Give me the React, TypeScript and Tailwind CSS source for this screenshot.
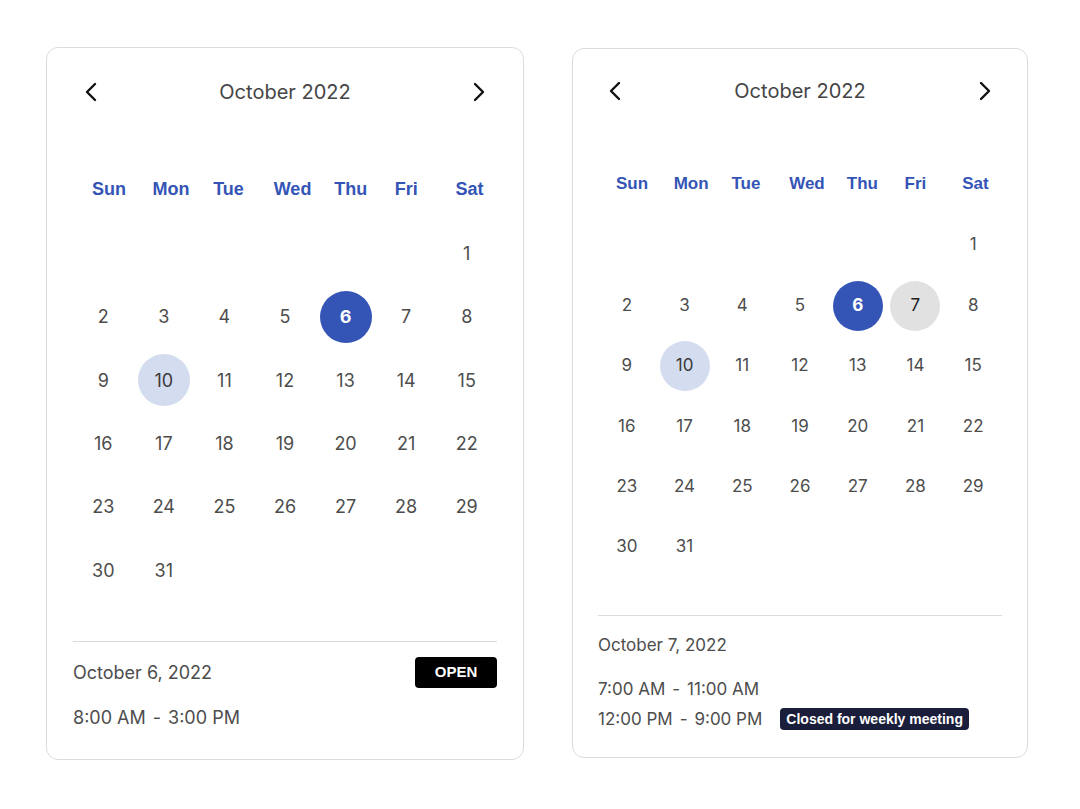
import React from "react";

type Mark = "selected" | "today" | "muted";

const WEEKDAYS = ["Sun", "Mon", "Tue", "Wed", "Thu", "Fri", "Sat"];

// October 2022 starts on a Saturday
const DAYS: (number | null)[] = [
  null, null, null, null, null, null,
  ...Array.from({ length: 31 }, (_, i) => i + 1),
];

function Chevron({ dir }: { dir: "left" | "right" }) {
  return (
    <svg width="12" height="20" viewBox="0 0 12 20" fill="none">
      <path
        d={dir === "left" ? "M10 2 L2 10 L10 18" : "M2 2 L10 10 L2 18"}
        stroke="#111"
        strokeWidth="2.4"
        strokeLinecap="round"
        strokeLinejoin="round"
      />
    </svg>
  );
}

function Range({ from, to }: { from: string; to: string }) {
  return (
    <span>
      {from}
      <span className="mx-[7px]">-</span>
      {to}
    </span>
  );
}

function CalendarGrid({
  marks,
  big,
}: {
  marks: Record<number, Mark>;
  big: boolean;
}) {
  const circle = big ? "w-[52px] h-[52px]" : "w-[50px] h-[50px]";
  const rowH = big ? "h-[63.33px]" : "h-[60.4px]";
  const numSize = big ? "text-[18px]" : "text-[17px]";

  return (
    <>
      {/* weekday labels */}
      <div
        className={`grid grid-cols-7 h-[28px] items-center ${big ? "mt-[63px]" : "mt-[59px]"}`}
      >
        {WEEKDAYS.map((d) => (
          <div
            key={d}
            className={`font-bold text-[#3455b6] ${big ? "text-[18px] pl-[19px]" : "text-[17px] pl-[18px]"}`}
            style={{ fontFamily: '"Liberation Sans", Arial, sans-serif' }}
          >
            {d}
          </div>
        ))}
      </div>

      {/* day numbers */}
      <div className={`grid grid-cols-7 ${big ? "mt-[19px]" : "mt-[17px]"}`}>
        {DAYS.map((n, i) => {
          const mark = n ? marks[n] : undefined;
          let tone = "text-[#4d4d4d]";
          if (mark === "selected") tone = "bg-[#3455b6] text-white font-bold";
          if (mark === "today") tone = "bg-[#d4dcf0] text-[#3a3a3a]";
          if (mark === "muted") tone = "bg-[#e1e1e1] text-[#222]";
          return (
            <div key={i} className={`${rowH} flex items-center justify-center`}>
              {n && (
                <div
                  className={`${circle} ${numSize} ${tone} rounded-full flex items-center justify-center`}
                >
                  {n}
                </div>
              )}
            </div>
          );
        })}
      </div>
    </>
  );
}

function Header({ big }: { big: boolean }) {
  return (
    <div
      className={`h-10 flex items-center justify-between ${big ? "px-[12px]" : "px-[11px]"}`}
    >
      <Chevron dir="left" />
      <span className="text-[20px] text-[#454545]">October 2022</span>
      <Chevron dir="right" />
    </div>
  );
}

export default function App() {
  const badgeFont = { fontFamily: '"Liberation Sans", Arial, sans-serif' };

  return (
    <div
      className="min-h-screen bg-white flex items-start gap-[48px] pl-[46px] pt-[47px]"
      style={{ fontFamily: "Inter, 'Noto Sans', sans-serif" }}
    >
      {/* Left calendar */}
      <section className="w-[478px] h-[713px] border border-[#dcdcdc] rounded-[12px] px-[26px] pt-[24px]">
        <Header big />
        <CalendarGrid big marks={{ 6: "selected", 10: "today" }} />

        <div className="mt-[39px] border-t border-[#dadada]" />

        <div className="mt-[15px] flex items-center justify-between h-[31px]">
          <span className="text-[18px] text-[#4d4d4d]">October 6, 2022</span>
          <span
            className="w-[82px] h-[31px] bg-black text-white font-bold text-[15px] rounded-[4px] flex items-center justify-center"
            style={badgeFont}
          >
            OPEN
          </span>
        </div>
        <div className="mt-[18px] h-6 flex items-center text-[18px] text-[#4d4d4d]">
          <Range from="8:00 AM" to="3:00 PM" />
        </div>
      </section>

      {/* Right calendar */}
      <section className="mt-px w-[456px] h-[710px] border border-[#dcdcdc] rounded-[12px] px-[25px] pt-[22px]">
        <Header big={false} />
        <CalendarGrid big={false} marks={{ 6: "selected", 7: "muted", 10: "today" }} />

        <div className="mt-[38px] border-t border-[#dadada]" />

        <div className="mt-[17px] h-6 flex items-center text-[17px] text-[#4d4d4d]">
          October 7, 2022
        </div>
        <div className="mt-[17px] text-[17px] text-[#4d4d4d]">
          <div className="h-[30px] flex items-center">
            <Range from="7:00 AM" to="11:00 AM" />
          </div>
          <div className="h-[30px] flex items-center gap-[18px]">
            <Range from="12:00 PM" to="9:00 PM" />
            <span
              className="h-[22px] px-[6px] bg-[#1b1e3a] text-white font-bold text-[14px] rounded-[4px] flex items-center"
              style={badgeFont}
            >
              Closed for weekly meeting
            </span>
          </div>
        </div>
      </section>
    </div>
  );
}
